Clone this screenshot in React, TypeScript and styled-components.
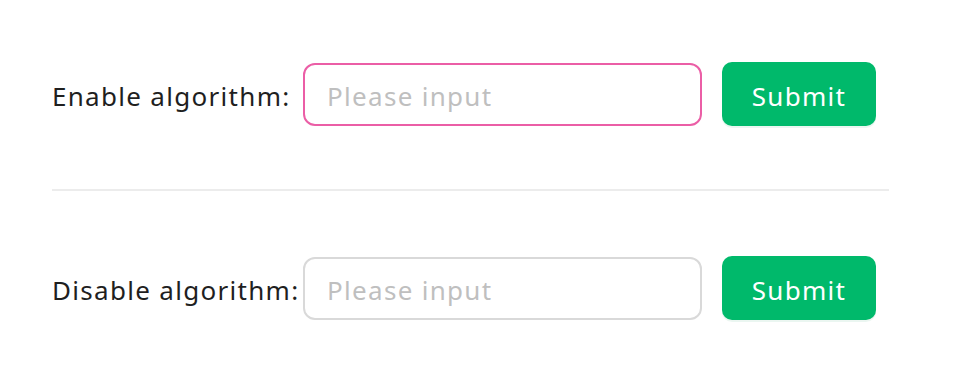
import React from "react";
import styled, { createGlobalStyle } from "styled-components";

const Global = createGlobalStyle`
  html, body { margin: 0; padding: 0; background: #ffffff; }
  body { font-family: "Noto Sans", "Open Sans", sans-serif; }
`;

const Page = styled.div`
  width: 956px;
  height: 376px;
  box-sizing: border-box;
  padding: 62px 0 0 52px;
`;

const Form = styled.div`
  width: 837px;
  display: flex;
  flex-direction: column;
`;

const Row = styled.div`
  display: flex;
  align-items: center;
  height: 64px;
`;

const Label = styled.label`
  width: 251px;
  flex: none;
  padding-top: 3px;
  font-size: 26px;
  letter-spacing: 1.3px;
  color: #1f1f1f;
  white-space: nowrap;
`;

const Input = styled.input<{ $focused?: boolean }>`
  width: 399px;
  height: 63px;
  box-sizing: border-box;
  border: 2px solid ${(p) => (p.$focused ? "#eb5ea6" : "#d9d9d9")};
  border-radius: 12px;
  padding: 3px 22px 0;
  font-family: inherit;
  font-size: 26px;
  letter-spacing: 1.3px;
  color: #1f1f1f;
  outline: none;
  &::placeholder { color: #bfbfbf; }
`;

const Button = styled.button`
  margin-left: 20px;
  width: 154px;
  height: 64px;
  padding: 3px 0 0;
  border: none;
  border-radius: 10px;
  background: #00b96b;
  color: #ffffff;
  font-family: inherit;
  font-size: 26px;
  letter-spacing: 1.3px;
  box-shadow: 0 2px 0 rgba(5, 145, 75, 0.08);
  cursor: pointer;
`;

const Divider = styled.div`
  height: 2px;
  background: #ececec;
  margin: 63px 0 65px;
`;

export default function App() {
  return (
    <>
      <Global />
      <Page>
        <Form>
          <Row>
            <Label>Enable algorithm:</Label>
            <Input $focused placeholder="Please input" />
            <Button>Submit</Button>
          </Row>
          <Divider />
          <Row>
            <Label>Disable algorithm:</Label>
            <Input placeholder="Please input" />
            <Button>Submit</Button>
          </Row>
        </Form>
      </Page>
    </>
  );
}
